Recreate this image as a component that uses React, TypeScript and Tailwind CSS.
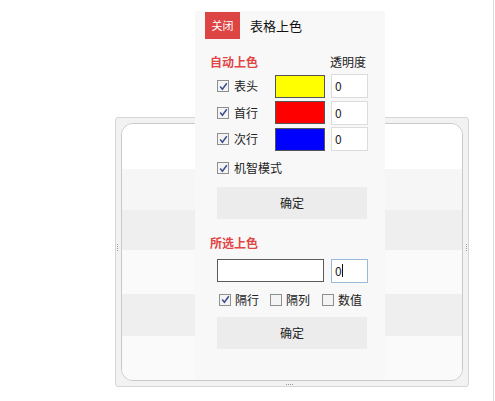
import React from "react";

const font = { fontFamily: '"Noto Sans CJK SC", "Noto Sans", sans-serif' };

function Check({ checked = false }: { checked?: boolean }) {
  return (
    <span className="w-[12px] h-[12px] border border-[#8e8f8f] bg-[#f4f4f4] flex items-center justify-center shrink-0">
      {checked && (
        <svg width="9" height="9" viewBox="0 0 9 9">
          <path d="M1.2 4.6 L3.4 7.2 L7.8 1.3" fill="none" stroke="#3c4c8c" strokeWidth="1.5" />
        </svg>
      )}
    </span>
  );
}

function ColorRow({ label, color }: { label: string; color: string }) {
  return (
    <div className="flex items-center h-[26.5px]">
      <div className="flex items-center gap-[5px] w-[58px]">
        <Check checked />
        <span className="text-[12px] text-[#222]">{label}</span>
      </div>
      <div className="w-[50px] h-[23px] border border-[#555]" style={{ background: color }} />
      <div className="ml-[6px] w-[37px] h-[24px] bg-white border border-[#dcdcdc] flex items-center pl-[3px] text-[12px] text-[#222]">
        0
      </div>
    </div>
  );
}

function Stripe({ h, bg }: { h: string; bg: string }) {
  return <div className={`${h} ${bg}`} />;
}

export default function App() {
  return (
    <div className="relative w-[495px] h-[401px] bg-white overflow-hidden" style={font}>
      <div className="w-[494px] h-[401px] border-r border-[#dcdcdc] pt-[117px] pl-[115px]">
        {/* background frame */}
        <div className="relative w-[354px] h-[270px] rounded-[3px] border border-[#d6d6d6] bg-[#f2f2f2] p-[5px]">
          <div className="h-full rounded-[12px] border border-[#c9c9c9] overflow-hidden flex flex-col">
            <Stripe h="h-[45px]" bg="bg-white" />
            <Stripe h="h-[41px]" bg="bg-[#f6f6f6]" />
            <Stripe h="h-[40px]" bg="bg-[#efefef]" />
            <Stripe h="h-[45px]" bg="bg-[#fafafa]" />
            <Stripe h="h-[42px]" bg="bg-[#efefef]" />
            <Stripe h="h-[44px]" bg="bg-[#fafafa]" />
          </div>
          <div className="absolute left-[1px] top-[126px] flex flex-col gap-[1px]">
            {[0, 1, 2, 3].map((i) => (
              <span key={i} className="w-[1px] h-[1px] bg-[#999]" />
            ))}
          </div>
          <div className="absolute right-[1px] top-[126px] flex flex-col gap-[1px]">
            {[0, 1, 2, 3].map((i) => (
              <span key={i} className="w-[1px] h-[1px] bg-[#999]" />
            ))}
          </div>
          <div className="absolute bottom-[1px] left-[170px] flex gap-[1px]">
            {[0, 1, 2, 3].map((i) => (
              <span key={i} className="w-[1px] h-[1px] bg-[#999]" />
            ))}
          </div>
        </div>
      </div>

      {/* popup panel */}
      <div className="absolute left-[195px] top-[11px] w-[190px] h-[368px] bg-[#f8f8f8] pl-[10px] pt-[1px]">
        <div className="flex items-center">
          <div className="w-[35px] h-[27px] bg-[#dd4545] text-white text-[11px] flex items-center justify-center">
            关闭
          </div>
          <span className="ml-[10px] text-[13px] text-[#111]">表格上色</span>
        </div>

        <div className="mt-[14px] flex items-center h-[18px] pl-[5px]">
          <span className="w-[120px] text-[12px] font-bold text-[#e04646]">自动上色</span>
          <span className="text-[12px] text-[#222]">透明度</span>
        </div>

        <div className="mt-[2px] pl-[12px]">
          <ColorRow label="表头" color="#ffff00" />
          <ColorRow label="首行" color="#ff0000" />
          <ColorRow label="次行" color="#0000ff" />
          <div className="flex items-center gap-[5px] h-[31px]">
            <Check checked />
            <span className="text-[12px] text-[#222]">机智模式</span>
          </div>
          <button className="mt-[3px] w-[150px] h-[32px] bg-[#ececec] text-[12px] text-[#222]">确定</button>
        </div>

        <div className="mt-[15px] pl-[5px] h-[18px] flex items-center text-[12px] font-bold text-[#e04646]">
          所选上色
        </div>

        <div className="mt-[7px] pl-[12px] flex items-center">
          <div className="w-[107px] h-[23px] bg-white border border-[#5a5a5a]" />
          <div className="ml-[7px] w-[37px] h-[24px] bg-white border border-[#9ab8d8] flex items-center pl-[3px] text-[12px] text-[#222]">
            0<span className="w-[1px] h-[13px] bg-[#111]" />
          </div>
        </div>

        <div className="mt-[5px] pl-[14px] h-[24px] flex items-center text-[12px] text-[#222]">
          <div className="flex items-center gap-[4px] w-[51px]">
            <Check checked />
            <span>隔行</span>
          </div>
          <div className="flex items-center gap-[4px] w-[52px]">
            <Check />
            <span>隔列</span>
          </div>
          <div className="flex items-center gap-[4px]">
            <Check />
            <span>数值</span>
          </div>
        </div>

        <div className="mt-[5px] pl-[12px]">
          <button className="w-[150px] h-[32px] bg-[#ececec] text-[12px] text-[#222]">确定</button>
        </div>
      </div>
    </div>
  );
}
